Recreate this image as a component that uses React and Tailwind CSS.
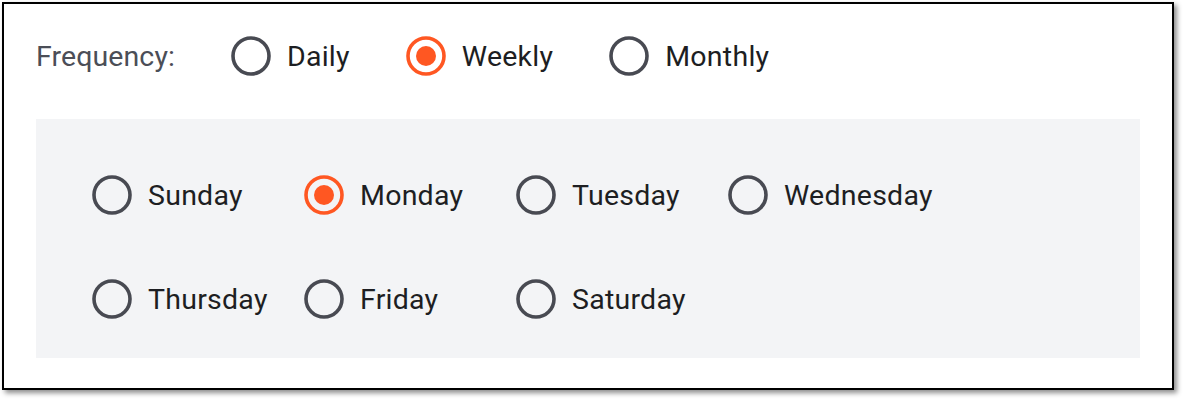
const Radio = ({ label, checked }) => (
  <label className="flex items-center gap-4">
    <svg width="40" height="40" viewBox="0 0 40 40" className="shrink-0">
      <circle
        cx="20"
        cy="20"
        r="18"
        fill="none"
        stroke={checked ? '#ff5722' : '#484a52'}
        strokeWidth="3.6"
      />
      {checked && <circle cx="20" cy="20" r="10" fill="#ff5722" />}
    </svg>
    <span className="text-[28.5px] leading-none pt-[2px] tracking-[0.25px] text-[#1d1e22]">{label}</span>
  </label>
);

const days = [
  { name: 'Sunday' },
  { name: 'Monday', checked: true },
  { name: 'Tuesday' },
  { name: 'Wednesday' },
  { name: 'Thursday' },
  { name: 'Friday' },
  { name: 'Saturday' },
];

export default function App() {
  return (
    <div className="bg-white pl-[2px] pt-[2px] h-[400px]" style={{ fontFamily: 'Roboto, "Noto Sans", sans-serif' }}>
      <div className="w-[1172px] h-[388px] border-2 border-black bg-white px-8 pt-8 shadow-[3px_3px_5px_rgba(0,0,0,0.45)]">
        {/* Frequency */}
        <div className="flex items-center gap-14 h-10">
          <span className="text-[28.5px] leading-none pt-[2px] tracking-[0.1px] text-[#4b4e57]">Frequency:</span>
          <Radio label="Daily" />
          <Radio label="Weekly" checked />
          <Radio label="Monthly" />
        </div>

        {/* Days */}
        <div className="mt-[43px] h-[239px] bg-gray-100 pl-14 pt-14">
          <div className="grid grid-cols-[repeat(4,212px)] gap-y-16">
            {days.map((d) => (
              <Radio key={d.name} label={d.name} checked={d.checked} />
            ))}
          </div>
        </div>
      </div>
    </div>
  );
}
